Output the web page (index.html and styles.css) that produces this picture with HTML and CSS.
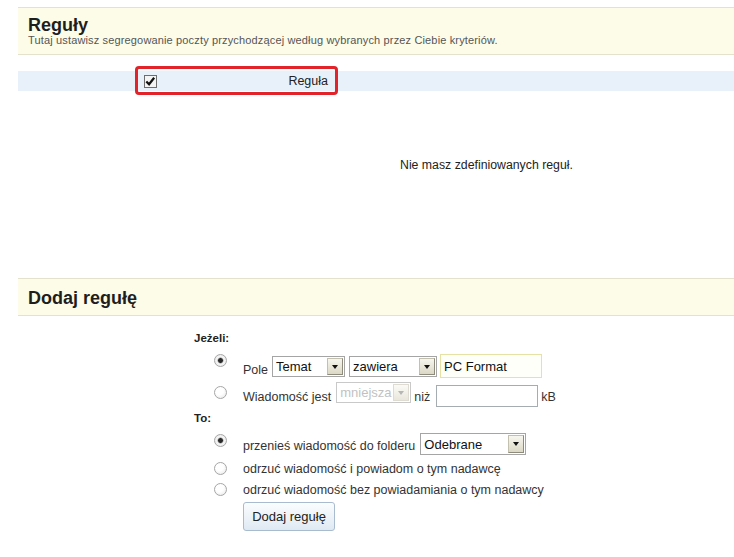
FILE: index.html
```html
<!DOCTYPE html>
<html>
  <head>
    <meta charset="utf-8">
    <title>Reguły</title>
    <link rel="stylesheet" href="styles.css">
  </head>
  <body>
    <div class="page">

      <div class="band band-top">
        <h1>Reguły</h1>
        <p class="lead">Tutaj ustawisz segregowanie poczty przychodzącej według wybranych przez Ciebie kryteriów.</p>
      </div>

      <div class="rules-head">
        <div class="rule-col">
          <span class="check">
            <svg width="13" height="13" viewBox="0 0 13 13"><polyline points="2.5,6.5 5.5,9.5 11,2.5" fill="none" stroke="#111" stroke-width="2.4"/></svg>
          </span>
          <span class="rule-name">Reguła</span>
        </div>
      </div>

      <p class="empty">Nie masz zdefiniowanych reguł.</p>

      <div class="band band-add">
        <h2>Dodaj regułę</h2>
      </div>

      <form class="rule-form">
        <div class="label">Jeżeli:</div>

        <div class="row row-field">
          <input type="radio" name="cond" checked>
          <span class="txt">Pole</span>
          <span class="combo combo-field"><select><option>Temat</option></select></span>
          <span class="combo combo-op"><select><option>zawiera</option></select></span>
          <input type="text" class="field field-hl" value="PC Format">
        </div>

        <div class="row row-size">
          <input type="radio" name="cond">
          <span class="txt">Wiadomość jest</span>
          <span class="combo combo-size disabled"><select disabled><option>mniejsza</option></select></span>
          <span class="txt txt-than">niż</span>
          <input type="text" class="field field-size" value="">
          <span class="txt">kB</span>
        </div>

        <div class="label label-to">To:</div>

        <div class="row row-move">
          <input type="radio" name="act" checked>
          <span class="txt">przenieś wiadomość do folderu</span>
          <span class="combo combo-folder"><select><option>Odebrane</option></select></span>
        </div>

        <div class="row row-small">
          <input type="radio" name="act">
          <span class="txt">odrzuć wiadomość i powiadom o tym nadawcę</span>
        </div>

        <div class="row row-small row-last">
          <input type="radio" name="act">
          <span class="txt">odrzuć wiadomość bez powiadamiania o tym nadawcy</span>
        </div>

        <button type="button" class="add">Dodaj regułę</button>
      </form>

    </div>
  </body>
</html>
```

FILE: styles.css
```css
body {
  margin: 0;
  background-color: #ffffff;
  color: #333333;
  font-family: "Liberation Sans", Arial, sans-serif;
}

.page {
  padding: 7px 0 0 18px;
}

/* yellow section bars */

.band {
  background-color: #fdfce9;
  border-top: 1px solid #e4e2cd;
  border-bottom: 1px solid #e4e2cd;
  padding-left: 10px;
}

.band h1,
.band h2 {
  margin: 0;
  font-size: 18px;
  font-weight: bold;
  color: #1e1e1e;
}

.band-top {
  padding-top: 9px;
  padding-bottom: 9px;
}

.band-top h1 {
  line-height: 16px;
}

.lead {
  margin: 2px 0 0;
  font-size: 11px;
  line-height: 10px;
  letter-spacing: 0.15px;
  color: #555555;
}

.band-add {
  margin-top: 105px;
  padding-top: 9px;
  padding-bottom: 7px;
}

.band-add h2 {
  line-height: 20px;
}

/* rules list header */

.rules-head {
  margin-top: 16px;
  height: 20px;
  background-color: #e8f1fa;
}

.rule-col {
  position: relative;
  margin-left: 120px;
  width: 197px;
  height: 20px;
  display: flex;
  align-items: center;
  justify-content: space-between;
  padding: 0 7px 0 6px;
  box-sizing: border-box;
}

.rule-col::after {
  content: "";
  position: absolute;
  top: -5px;
  left: -3px;
  right: -3px;
  bottom: -4px;
  border: 3px solid #e2232a;
  border-radius: 4px;
}

.check {
  width: 13px;
  height: 13px;
  border: 1px solid #6d6d6d;
  box-sizing: border-box;
  background-color: #f4f4f4;
  display: flex;
}

.check svg {
  margin: -1px 0 0 -1px;
}

.rule-name {
  font-size: 12.5px;
  color: #222222;
}

.empty {
  margin: 67px 0 0;
  padding-left: 382px;
  font-size: 12.3px;
  line-height: 15px;
  color: #222222;
}

/* add rule form */

.rule-form {
  margin: 15px 0 0 176px;
}

.label {
  font-size: 11.5px;
  font-weight: bold;
  line-height: 14px;
  color: #222222;
}

.label-to {
  margin-top: 5px;
}

.row {
  display: flex;
  align-items: center;
  padding-left: 20px;
  font-size: 12.5px;
}

.row input[type="radio"] {
  appearance: none;
  -webkit-appearance: none;
  width: 13px;
  height: 13px;
  margin: 0 16px 2px 0;
  border: 1px solid #a6a6a6;
  border-radius: 50%;
  background: radial-gradient(circle at 40% 35%, #ffffff 40%, #e4e4e4 100%);
  box-sizing: border-box;
  flex: none;
}

.row input[type="radio"]:checked {
  background: radial-gradient(circle, #2a2a2a 0, #2a2a2a 2px, #9a9a9a 2.6px, #f6f6f6 3.4px, #e4e4e4 100%);
}

.row-field {
  margin-top: 9px;
  height: 24px;
}

.row-field input[type="radio"] {
  margin-bottom: 11px;
}

.row-size {
  margin-top: 4px;
  height: 24px;
}

.row-size input[type="radio"] {
  margin-bottom: 4px;
}

.row-move {
  margin-top: 8px;
  height: 22px;
}

.row-move input[type="radio"] {
  margin-bottom: 8px;
}

.row-small {
  margin-top: 4px;
  height: 20px;
}

.row-last {
  margin-top: 1px;
}

.txt {
  color: #333333;
  white-space: nowrap;
}

.row-size .txt {
  margin-top: 6px;
}

.row-field .txt {
  margin-top: 8px;
}

.row-move .txt {
  margin-top: 3px;
}

.txt-than {
  margin: 6px 0 0 3px;
}

/* combo boxes */

.combo {
  position: relative;
  display: inline-block;
  height: 21px;
  margin-left: 4px;
  border: 1px solid #a5a5a5;
  box-sizing: border-box;
  background-color: #ffffff;
}

.combo select {
  appearance: none;
  -webkit-appearance: none;
  width: 100%;
  height: 100%;
  border: 0;
  margin: 0;
  padding: 0 0 0 3px;
  background: transparent;
  font-family: "Liberation Sans", Arial, sans-serif;
  font-size: 13px;
  color: #111111;
  outline: none;
}

.combo::after {
  content: "";
  position: absolute;
  top: 1px;
  right: 1px;
  bottom: 1px;
  width: 16px;
  box-sizing: border-box;
  border: 1px solid #c4c0b0;
  border-right-color: #8e8a7c;
  border-bottom-color: #8e8a7c;
  background: linear-gradient(#f7f6ef, #dcd8c6);
}

.combo::before {
  content: "";
  position: absolute;
  z-index: 1;
  top: 8px;
  right: 6px;
  border-left: 3.5px solid transparent;
  border-right: 3.5px solid transparent;
  border-top: 4px solid #111111;
}

.combo-field {
  width: 73px;
}

.combo-op {
  width: 88px;
}

.combo-size {
  width: 75px;
  margin-left: 5px;
  margin-top: -3px;
}

.combo-folder {
  width: 106px;
  height: 22px;
  margin-left: 5px;
}

.combo.disabled {
  border-color: #c9c9c9;
}

.combo.disabled select {
  color: #a8a8a8;
}

.combo.disabled::after {
  border-color: #dedcd2;
  background: linear-gradient(#fbfaf6, #e9e7dc);
}

.combo.disabled::before {
  border-top-color: #b6b6b6;
}

/* text fields */

.field {
  height: 22px;
  margin: 0 0 0 3px;
  padding: 0 3px;
  box-sizing: border-box;
  border: 1px solid #a5acb2;
  font-family: "Liberation Sans", Arial, sans-serif;
  font-size: 13px;
  color: #111111;
  background-color: #ffffff;
}

.field-hl {
  width: 102px;
  height: 24px;
  border-color: #e6e1a4;
  background-color: #fffff9;
}

.field-size {
  width: 102px;
  margin: 3px 3px 0 6px;
}

.add {
  margin: 2px 0 0 49px;
  width: 92px;
  height: 29px;
  padding: 0;
  border: 1px solid #a9bccf;
  border-radius: 3px;
  background: linear-gradient(#fbfdfe, #dfe9f3);
  font-family: "Liberation Sans", Arial, sans-serif;
  font-size: 13px;
  color: #222222;
}
```
